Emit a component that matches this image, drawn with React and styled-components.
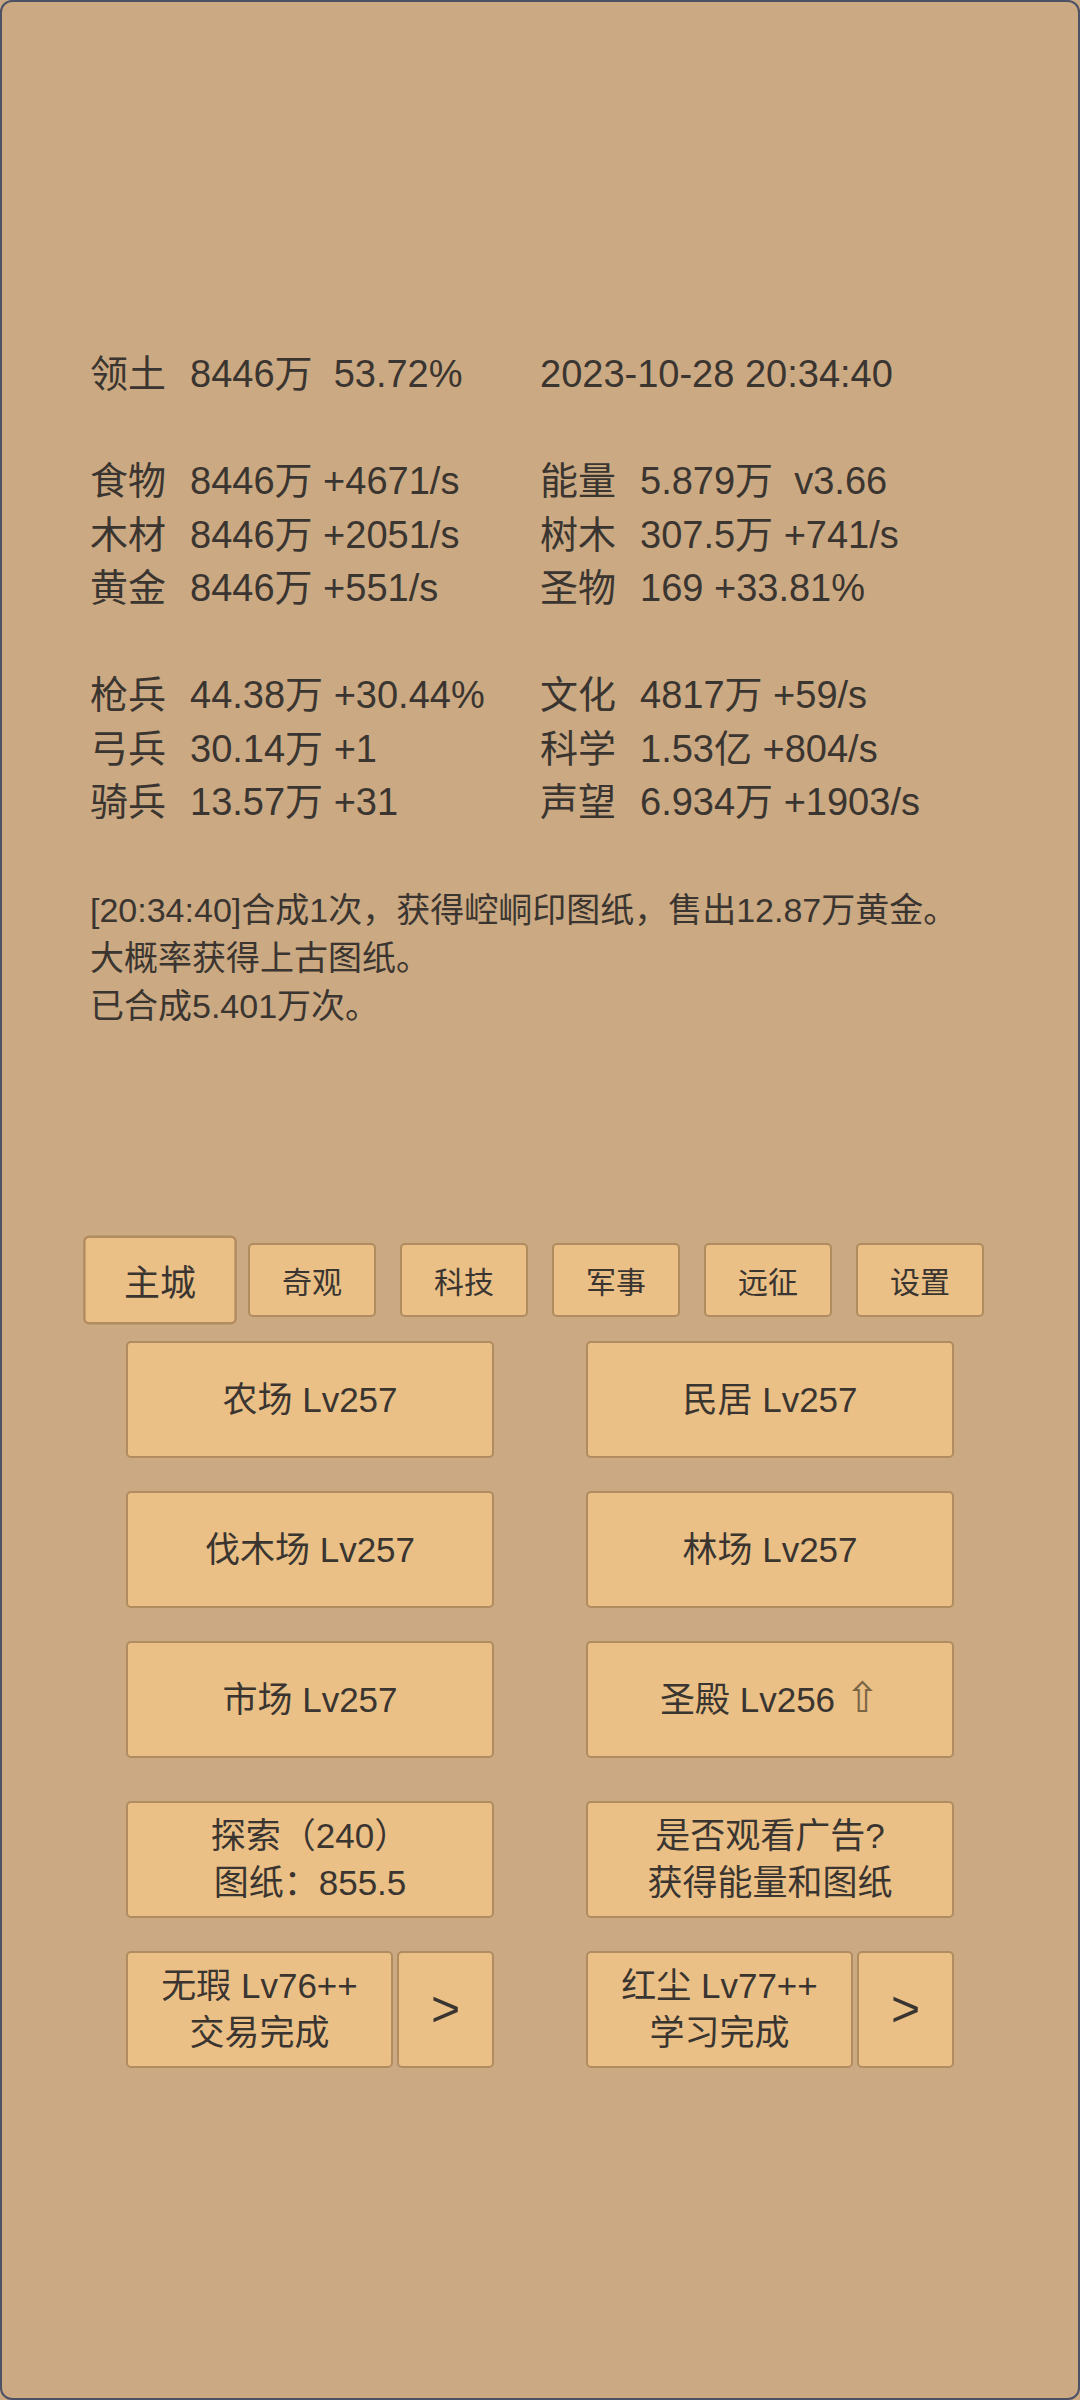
import styled, { createGlobalStyle } from "styled-components";

const GlobalStyle = createGlobalStyle`
  html, body {
    margin: 0;
    padding: 0;
    background: #cba982;
  }
  * {
    box-sizing: border-box;
  }
`;

const FONT = `"Liberation Sans", Arial, "Noto Sans CJK SC", sans-serif`;

const Screen = styled.div`
  width: 1080px;
  height: 2400px;
  background: #cba982;
  border: 2px solid #4c5166;
  border-radius: 12px;
  color: #3a3530;
  font-family: ${FONT};
  display: flex;
  flex-direction: column;
  padding-top: 346px;
`;

const Stats = styled.div`
  display: flex;
  flex-direction: column;
  padding-left: 88px;
  font-size: 38px;
  line-height: 53.5px;
`;

const StatRow = styled.div`
  display: grid;
  grid-template-columns: 450px auto;
  height: 53.5px;
`;

const Cell = styled.div`
  display: flex;
  white-space: pre;
`;

const Label = styled.span`
  width: 100px;
  flex-shrink: 0;
`;

const Log = styled.div`
  margin-top: 56px;
  padding-left: 88px;
  font-size: 34px;
  line-height: 48px;
  white-space: pre-line;
`;

const Tabs = styled.div`
  margin-top: 213px;
  display: flex;
  justify-content: center;
  gap: 24px;
`;

const Tab = styled.div`
  width: 128px;
  height: 74px;
  display: flex;
  align-items: center;
  justify-content: center;
  background: #eac086;
  border: 2px solid #b08c60;
  border-radius: 5px;
  font-size: 30px;
  transform: ${(p) => (p.$active ? "scale(1.2)" : "none")};
`;

const Grid = styled.div`
  margin-top: 24px;
  display: grid;
  grid-template-columns: 368px 368px;
  column-gap: 92px;
  row-gap: 33px;
  justify-content: center;
`;

const Button = styled.div`
  height: 117px;
  display: flex;
  flex-direction: column;
  align-items: center;
  justify-content: center;
  background: #eac086;
  border: 2px solid #b08c60;
  border-radius: 5px;
  font-size: 35px;
  line-height: 47px;
  white-space: pre;
  text-align: center;
  margin-top: ${(p) => (p.$push ? "10px" : "0")};
`;

const Split = styled.div`
  display: flex;
  gap: 4px;
`;

const SplitMain = styled(Button)`
  flex: 1;
`;

const Arrow = styled(Button)`
  width: 97px;
  flex-shrink: 0;
  font-size: 50px;
`;

const UpIcon = styled.span`
  font-family: "DejaVu Sans", sans-serif;
  color: #7a6647;
  font-size: 42px;
  line-height: 1;
`;

const stats = [
  [["领土", "8446万  53.72%"], ["", "2023-10-28 20:34:40"]],
  null,
  [["食物", "8446万 +4671/s"], ["能量", "5.879万  v3.66"]],
  [["木材", "8446万 +2051/s"], ["树木", "307.5万 +741/s"]],
  [["黄金", "8446万 +551/s"], ["圣物", "169 +33.81%"]],
  null,
  [["枪兵", "44.38万 +30.44%"], ["文化", "4817万 +59/s"]],
  [["弓兵", "30.14万 +1"], ["科学", "1.53亿 +804/s"]],
  [["骑兵", "13.57万 +31"], ["声望", "6.934万 +1903/s"]],
];

const tabs = ["主城", "奇观", "科技", "军事", "远征", "设置"];

export default function App() {
  return (
    <>
      <GlobalStyle />
      <Screen>
        <Stats>
          {stats.map((row, i) => (
            <StatRow key={i}>
              {row &&
                row.map(([label, value], j) => (
                  <Cell key={j}>
                    {label ? <Label>{label}</Label> : null}
                    <span>{value}</span>
                  </Cell>
                ))}
            </StatRow>
          ))}
        </Stats>

        <Log>
          {"[20:34:40]合成1次，获得崆峒印图纸，售出12.87万黄金。\n大概率获得上古图纸。\n已合成5.401万次。"}
        </Log>

        <Tabs>
          {tabs.map((t, i) => (
            <Tab key={t} $active={i === 0}>
              {t}
            </Tab>
          ))}
        </Tabs>

        <Grid>
          <Button>农场 Lv257</Button>
          <Button>民居 Lv257</Button>
          <Button>伐木场 Lv257</Button>
          <Button>林场 Lv257</Button>
          <Button>市场 Lv257</Button>
          <Button>
            <span>
              圣殿 Lv256 <UpIcon>⇧</UpIcon>
            </span>
          </Button>
          <Button $push>{"探索（240）\n图纸：855.5"}</Button>
          <Button $push>{"是否观看广告?\n获得能量和图纸"}</Button>
          <Split>
            <SplitMain>{"无瑕 Lv76++\n交易完成"}</SplitMain>
            <Arrow>&gt;</Arrow>
          </Split>
          <Split>
            <SplitMain>{"红尘 Lv77++\n学习完成"}</SplitMain>
            <Arrow>&gt;</Arrow>
          </Split>
        </Grid>
      </Screen>
    </>
  );
}
